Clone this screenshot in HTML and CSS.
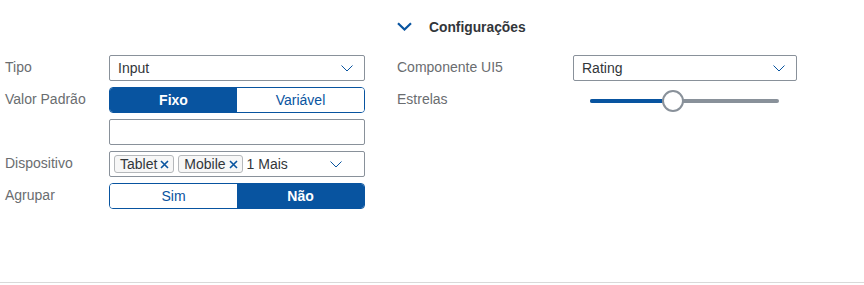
FILE: index.html
```html
<!DOCTYPE html>
<html lang="pt">
<head>
<meta charset="utf-8">
<link rel="stylesheet" href="styles.css">
</head>
<body>
<div class="panel">
  <div class="cols">
    <section class="col col-left">
      <div class="head"></div>
      <div class="form form-left">
        <div class="label">Tipo</div>
        <div class="select">
          <span class="value">Input</span>
          <svg class="arrow" width="12" height="7" viewBox="0 0 12 7"><path d="M0.5 0.5 L6 6 L11.5 0.5" fill="none" stroke="#0854a0" stroke-width="1"/></svg>
        </div>

        <div class="label">Valor Padrão</div>
        <div class="segmented">
          <button class="seg selected">Fixo</button>
          <button class="seg">Variável</button>
        </div>

        <div class="label"></div>
        <div class="input"></div>

        <div class="label">Dispositivo</div>
        <div class="select multi">
          <span class="token">Tablet<svg class="x" width="9" height="9" viewBox="0 0 9 9"><path d="M1 1 L8 8 M8 1 L1 8" stroke="#0854a0" stroke-width="1.6" fill="none"/></svg></span>
          <span class="token">Mobile<svg class="x" width="9" height="9" viewBox="0 0 9 9"><path d="M1 1 L8 8 M8 1 L1 8" stroke="#0854a0" stroke-width="1.6" fill="none"/></svg></span>
          <span class="more">1 Mais</span>
          <svg class="arrow arrow-multi" width="12" height="7" viewBox="0 0 12 7"><path d="M0.5 0.5 L6 6 L11.5 0.5" fill="none" stroke="#0854a0" stroke-width="1"/></svg>
        </div>

        <div class="label">Agrupar</div>
        <div class="segmented">
          <button class="seg">Sim</button>
          <button class="seg selected">Não</button>
        </div>
      </div>
    </section>

    <section class="col col-right">
      <div class="head">
        <svg class="head-chev" width="15" height="9" viewBox="0 0 15 9"><path d="M1 1.2 L7.5 7.5 L14 1.2" fill="none" stroke="#0854a0" stroke-width="2.2"/></svg>
        <span class="title">Configurações</span>
      </div>
      <div class="form form-right">
        <div class="label">Componente UI5</div>
        <div class="select">
          <span class="value">Rating</span>
          <svg class="arrow" width="12" height="7" viewBox="0 0 12 7"><path d="M0.5 0.5 L6 6 L11.5 0.5" fill="none" stroke="#0854a0" stroke-width="1"/></svg>
        </div>

        <div class="label">Estrelas</div>
        <div class="slider">
          <div class="track">
            <div class="fill" style="width: 72px"></div>
            <div class="handle" style="left: 72px"></div>
          </div>
        </div>
      </div>
    </section>
  </div>
</div>
</body>
</html>
```

FILE: styles.css
```css
* { box-sizing: border-box; }
html, body { margin: 0; padding: 0; background: #fff; }
body {
  font-family: "Liberation Sans", Arial, sans-serif;
  font-size: 14px;
  color: #32363a;
}
.panel {
  height: 283px;
  border-bottom: 1px solid #d9d9d9;
}
.cols {
  display: flex;
  gap: 32px;
  padding-left: 5px;
}
.head {
  height: 55px;
  display: flex;
  align-items: center;
}
.head-chev { margin-top: -2px; }
.title {
  font-weight: bold;
  color: #32363a;
  margin-left: 17px;
  font-size: 13.8px;
}
.form {
  display: grid;
  grid-auto-rows: 26px;
  row-gap: 6px;
}
.form-left { grid-template-columns: 104px 256px; }
.form-right { grid-template-columns: 176px 224px; }
.label {
  color: #6a6d70;
  line-height: 24px;
  white-space: nowrap;
}
.select, .input {
  border: 1px solid #89919a;
  border-radius: 2px;
  background: #fff;
  display: flex;
  align-items: center;
  padding-left: 8px;
  position: relative;
}
.select .value { flex: 1; }
.arrow { margin-right: 11px; margin-top: 1px; }
.multi { padding-left: 4px; gap: 4px; }
.multi .more { flex: 1; margin-left: 0; }
.arrow-multi { margin-right: 22px; }
.token {
  display: inline-flex;
  align-items: center;
  height: 18px;
  border: 1px solid #b5b8bb;
  border-radius: 3px;
  background: #f7f7f7;
  padding: 0 4px 0 5px;
  gap: 3px;
}
.token .x { display: block; }
.segmented {
  display: flex;
  border: 1px solid #0854a0;
  border-radius: 4px;
  overflow: hidden;
}
.seg {
  flex: 1;
  border: 0;
  margin: 0;
  padding: 0;
  background: #fff;
  color: #0854a0;
  font-family: inherit;
  font-size: 14px;
}
.seg.selected {
  background: #0854a0;
  color: #fff;
  font-weight: bold;
}
.slider {
  display: flex;
  align-items: center;
  padding: 0 18px 0 17px;
}
.track {
  position: relative;
  flex: 1;
  height: 4px;
  border-radius: 2px;
  background: #89919a;
  margin-top: 1px;
}
.fill {
  height: 4px;
  background: #0854a0;
  border-radius: 2px 0 0 2px;
}
.handle {
  position: absolute;
  top: -9px;
  width: 22px;
  height: 22px;
  border-radius: 50%;
  border: 2px solid #89919a;
  background: #fff;
}
```
